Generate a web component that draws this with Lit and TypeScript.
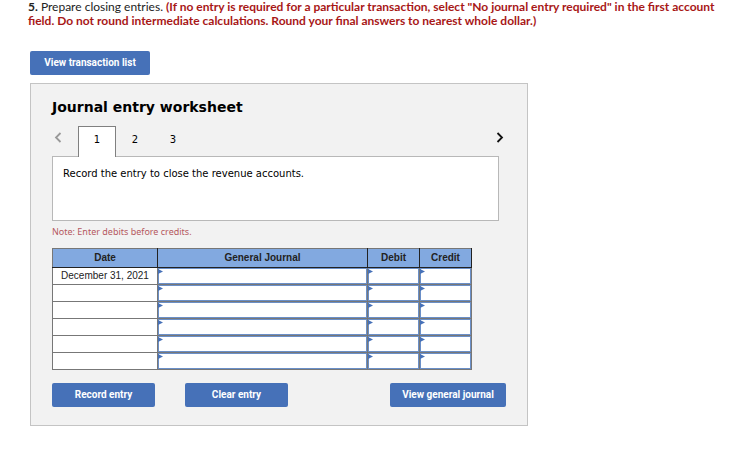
import { LitElement, html, css, svg } from "lit";
import { customElement, state } from "lit/decorators.js";

@customElement("app-root")
export class AppRoot extends LitElement {
  @state() private tab = 1;

  static styles = css`
    :host {
      display: block;
      background: #fff;
      color: #000;
      font-family: "DejaVu Sans", Verdana, sans-serif;
      font-size: 10px;
    }
    * { box-sizing: border-box; }
    button {
      font: inherit;
      color: inherit;
      border: 0;
      padding: 0;
      background: none;
      cursor: pointer;
    }
    .page { padding: 0 20px 32px 28px; }
    .instructions {
      margin: 0;
      color: #222;
      font: 12px/14px Lato, sans-serif;
    }
    .instructions .warn { color: #a81717; }
    .content { padding-left: 2px; }
    .btn {
      height: 24px;
      background: #4671b8;
      color: #fff;
      border-radius: 2px;
      font: bold 10px/24px Roboto, sans-serif;
      white-space: nowrap;
    }
    .list { display: block; width: 120px; margin: 23px 0 8px; }
    .panel {
      max-width: 498px;
      border: 1px solid #c4c4c4;
      background: #f2f2f2;
      padding: 14px 21px 18px;
    }
    h1 { margin: 0; font-size: 14px; line-height: 18px; }
    .tabs {
      display: flex;
      align-items: center;
      margin-top: 10px;
    }
    .arrow { width: 12px; height: 24px; margin-bottom: 6px; }
    .arrow svg { display: block; margin: auto; }
    .prev { margin-right: 14px; }
    .next { margin-left: auto; }
    .tab {
      width: 38px;
      height: 31px;
      margin-bottom: -1px;
      padding-bottom: 6px;
      border: 1px solid transparent;
      border-bottom: 0;
      font-size: 10px;
    }
    .tab.on { background: #fff; border-color: #808080; position: relative; }
    .task {
      margin-right: 7px;
      min-height: 65px;
      border: 1px solid #b8b8b8;
      background: #fff;
      padding: 10px;
      line-height: 14px;
    }
    .note {
      margin: 4px 0 9px;
      color: #b5595f;
      font: 9px/14px "Noto Sans", sans-serif;
    }
    table {
      width: 100%;
      max-width: 420px;
      table-layout: fixed;
      border-collapse: collapse;
      font: 10px/14px "Liberation Sans", Arial, sans-serif;
      color: #222;
    }
    th, td { padding: 0; border: 1px solid #777; text-align: center; }
    th {
      height: 19px;
      background: #82a9e0;
      border-color: #222;
      border-top-color: #777;
    }
    th:first-child { border-left-color: #777; }
    td { height: 17px; background: #fff; }
    .date { width: 105px; }
    .amount { width: 52px; }
    .field { display: block; position: relative; height: 16px; }
    .field input {
      display: block;
      width: 100%;
      height: 16px;
      margin: 0;
      padding: 0 6px;
      border: 1px solid #6a8fc8;
      border-radius: 0;
      background: #fff;
      font: inherit;
      outline: 0;
    }
    .field svg { position: absolute; left: 0; top: 1px; }
    .actions {
      display: flex;
      gap: 30px;
      margin-top: 13px;
    }
    .actions .btn { width: 103px; }
    .actions .btn:last-child { width: 116px; margin-left: auto; }
  `;

  private chevron(d: string, color: string) {
    return html`<svg width="8" height="12" viewBox="0 0 8 12" fill="none" aria-hidden="true">
      ${svg`<path d=${d} stroke=${color} stroke-width="1.8" />`}
    </svg>`;
  }

  private field(label: string, row: number) {
    return html`<td>
      <span class="field">
        <input type="text" aria-label="${label}, row ${row}" />
        <svg width="5" height="5" viewBox="0 0 5 5" aria-hidden="true">
          <path d="M0 0L5 2.5L0 5Z" fill="#4671b8" />
        </svg>
      </span>
    </td>`;
  }

  render() {
    return html`
      <main class="page">
        <p class="instructions">
          <b>5.</b> Prepare closing entries.
          <b class="warn">(If no entry is required for a particular transaction, select "No journal entry required" in the first account field. Do not round intermediate calculations. Round your final answers to nearest whole dollar.)</b>
        </p>
        <div class="content">
          <button class="btn list">View transaction list</button>
          <section class="panel">
            <h1>Journal entry worksheet</h1>
            <nav class="tabs">
              <button class="arrow prev" aria-label="Previous">
                ${this.chevron("M6.5 1L2 5.5L6.5 10", "#999")}
              </button>
              ${[1, 2, 3].map(
                (n) => html`<button
                  class="tab ${n === this.tab ? "on" : ""}"
                  @click=${() => (this.tab = n)}
                >${n}</button>`
              )}
              <button class="arrow next" aria-label="Next">
                ${this.chevron("M1.5 1L6 5.5L1.5 10", "#111")}
              </button>
            </nav>
            <div class="task">Record the entry to close the revenue accounts.</div>
            <p class="note">Note: Enter debits before credits.</p>
            <table>
              <thead>
                <tr>
                  <th class="date">Date</th>
                  <th>General Journal</th>
                  <th class="amount">Debit</th>
                  <th class="amount">Credit</th>
                </tr>
              </thead>
              <tbody>
                ${["December 31, 2021", "", "", "", "", ""].map(
                  (date, i) => html`<tr>
                    <td>${date}</td>
                    ${this.field("General Journal", i + 1)}
                    ${this.field("Debit", i + 1)}
                    ${this.field("Credit", i + 1)}
                  </tr>`
                )}
              </tbody>
            </table>
            <div class="actions">
              <button class="btn">Record entry</button>
              <button class="btn">Clear entry</button>
              <button class="btn">View general journal</button>
            </div>
          </section>
        </div>
      </main>
    `;
  }
}
